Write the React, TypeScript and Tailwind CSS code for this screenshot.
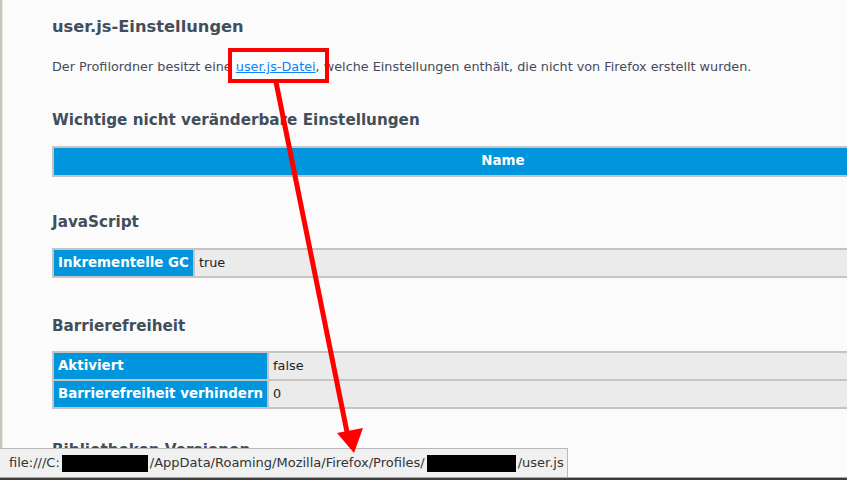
import React from 'react';

type Row = { key: string; value: string };

const jsRows: Row[] = [{ key: 'Inkrementelle GC', value: 'true' }];

const a11yRows: Row[] = [
  { key: 'Aktiviert', value: 'false' },
  { key: 'Barrierefreiheit verhindern', value: '0' },
];

const font = { fontFamily: '"DejaVu Sans", Verdana, sans-serif' };

const KeyValueTable = ({ rows }: { rows: Row[] }) => (
  <div className="grid w-[902px] grid-cols-[auto_1fr] gap-[2px] bg-[#c4c4c4] p-[2px]">
    {rows.map((row) => (
      <React.Fragment key={row.key}>
        <div className="flex h-[26px] items-center bg-[#0095dd] px-[4px] text-[13.4px] font-bold text-white">
          {row.key}
        </div>
        <div className="flex h-[26px] items-center bg-[#ebebeb] px-[4px] text-[12.8px] text-[#222]">
          {row.value}
        </div>
      </React.Fragment>
    ))}
  </div>
);

export default function App() {
  return (
    <div
      className="relative h-[480px] w-[847px] overflow-hidden bg-[#fbfbfb] text-[#474a5a]"
      style={font}
    >
      <div className="flex h-[477px] border-l-[2px] border-[#cbc6bd]">
        <div className="flex-1 border-l border-[#e9e7e3] pl-[49px]">
          <h1 className="mt-[17px] h-[20px] text-[16.3px] font-bold leading-[20px] text-[#424e5a]">
            user.js-Einstellungen
          </h1>
          <p className="mt-[22px] h-[16px] whitespace-nowrap text-[12.8px] leading-[16px]">
            Der Profilordner besitzt eine{' '}
            <span className="text-[#0a84ff] underline">user.js-Datei</span>, welche Einstellungen
            enthält, die nicht von Firefox erstellt wurden.
          </p>

          <h2 className="mt-[36px] h-[18px] text-[15.2px] font-bold leading-[18px] text-[#424e5a]">
            Wichtige nicht veränderbare Einstellungen
          </h2>
          <div className="mt-[17px] w-[902px] bg-[#c4c4c4] p-[2px]">
            <div className="flex h-[27px] items-center justify-center bg-[#0095dd] text-[13.4px] font-bold text-white">
              Name
            </div>
          </div>

          <h2 className="mt-[36px] h-[18px] text-[15.2px] font-bold leading-[18px] text-[#424e5a]">
            JavaScript
          </h2>
          <div className="mt-[17px]">
            <KeyValueTable rows={jsRows} />
          </div>

          <h2 className="mt-[39px] h-[18px] text-[15.2px] font-bold leading-[18px] text-[#424e5a]">
            Barrierefreiheit
          </h2>
          <div className="mt-[16px]">
            <KeyValueTable rows={a11yRows} />
          </div>

          <h2 className="mt-[32px] h-[18px] text-[15.2px] font-bold leading-[18px] text-[#424e5a]">
            Bibliotheken-Versionen
          </h2>
        </div>
      </div>

      {/* window bottom edge */}
      <div className="h-[1px] bg-[#a8a8a8]" />
      <div className="h-[2px] bg-[#3c3c3c]" />

      {/* status bar with hovered link target */}
      <div className="absolute bottom-[3px] left-0 flex h-[29px] w-[568px] items-center border-r border-t border-[#b9b9b9] bg-[#f0f0f0] pl-[9px] text-[13px] text-[#333]">
        <span>file:///C:</span>
        <span className="mx-[2px] h-[17px] w-[86px] bg-black" />
        <span>/AppData/Roaming/Mozilla/Firefox/Profiles/</span>
        <span className="mx-[2px] h-[17px] w-[89px] bg-black" />
        <span>/user.js</span>
      </div>

      {/* annotation: red box + arrow */}
      <div className="absolute left-[228px] top-[48px] h-[35px] w-[101px] border-[4px] border-[#ff0000]" />
      <svg className="absolute left-0 top-0" width="847" height="480" viewBox="0 0 847 480">
        <line x1="276" y1="82" x2="347" y2="432" stroke="#ff0000" strokeWidth="5" />
        <polygon points="337,433 363,428 354,453" fill="#ff0000" />
      </svg>
    </div>
  );
}
